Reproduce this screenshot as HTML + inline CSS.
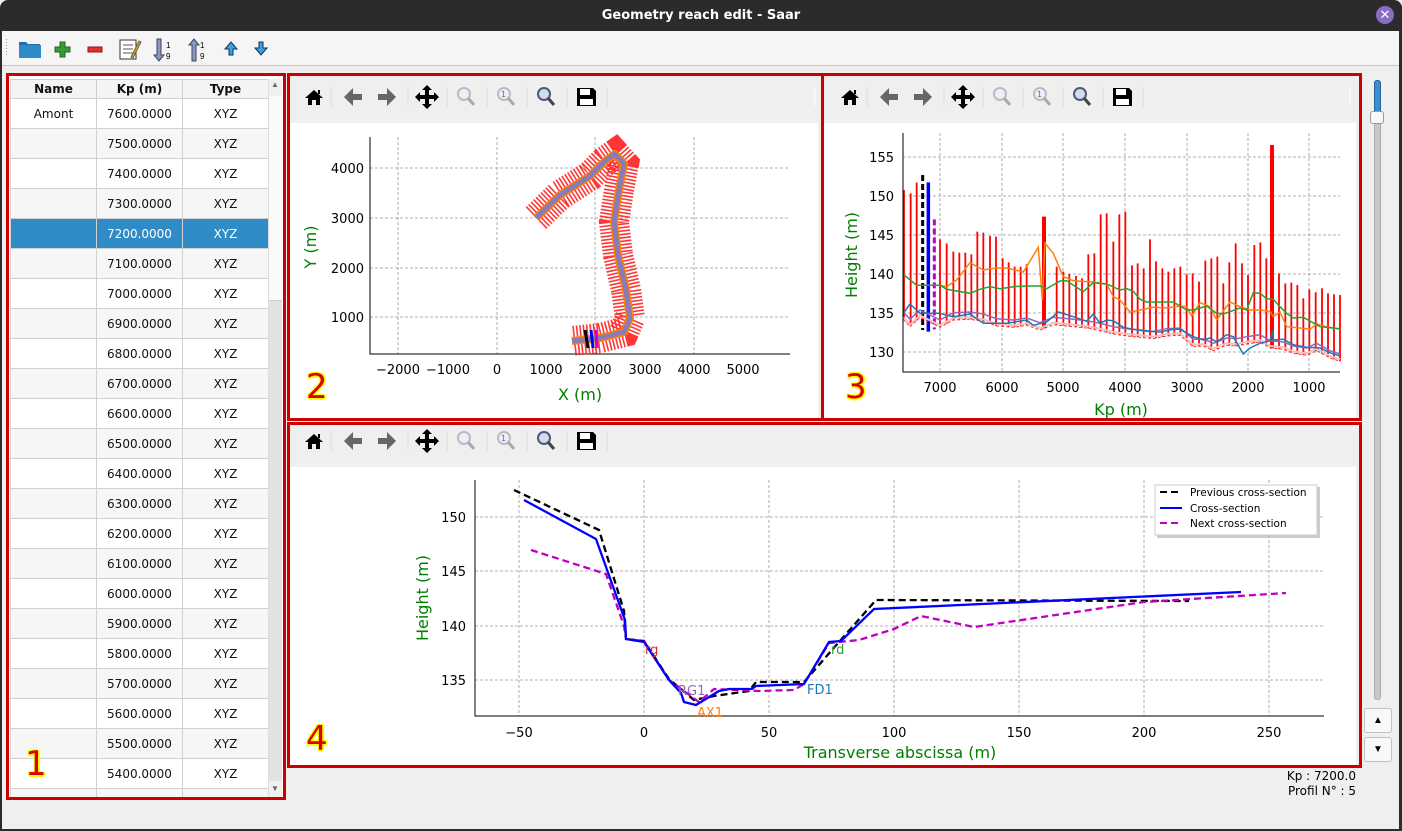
<!DOCTYPE html>
<html><head><meta charset="utf-8"><style>
*{margin:0;padding:0;box-sizing:border-box}
body{width:1402px;height:831px;background:#efefef;font-family:"Liberation Sans","DejaVu Sans",sans-serif;position:relative;overflow:hidden}
.abs{position:absolute}
#title{left:0;top:0;width:1402px;height:31px;background:#2b2b2b;color:#fff;font:bold 13px "DejaVu Sans",sans-serif;text-align:center;line-height:31px;border-radius:8px 8px 0 0}
#close{right:8px;top:6px;width:18px;height:18px;border-radius:50%;background:#8a6cc1;color:#fff;font-size:13px;line-height:18px;text-align:center}
.red{border:3px solid #cc0000}
table{border-collapse:collapse;font:12px "DejaVu Sans",sans-serif;table-layout:fixed}
td,th{border:1px solid #d0d0d0;text-align:center;height:30px;color:#111}
th{height:19px;font-weight:bold;background:#f4f4f4}
tr.g td{background:#f6f6f6}
tr.s td{background:#308cc6;color:#fff}
.num{font:34px "DejaVu Sans",sans-serif;color:#dd0000;text-shadow:-1px -1px 0 #ff0,1px -1px 0 #ff0,-1px 1px 0 #ff0,1px 1px 0 #ff0,0 2px 0 #ff0,2px 0 0 #ff0}
</style></head><body>
<div id="title" class="abs">Geometry reach edit - Saar</div>
<div id="close" class="abs">✕</div>
<div class="abs" style="left:0;top:31px;width:2px;height:800px;background:#2b2b2b"></div>
<div class="abs" style="left:1399px;top:31px;width:3px;height:800px;background:#2b2b2b"></div>
<div class="abs" style="left:0;top:829px;width:1402px;height:2px;background:#2b2b2b"></div>
<div class="abs" style="left:2px;top:31px;width:1397px;height:35px;background:#f5f5f5;border-bottom:1px solid #c8c8c8"></div>

<svg class="abs" style="left:0;top:31px" width="300" height="36">
<g fill="#999"><rect x="6" y="8" width="1" height="1"/><rect x="6" y="11" width="1" height="1"/><rect x="6" y="14" width="1" height="1"/><rect x="6" y="17" width="1" height="1"/><rect x="6" y="20" width="1" height="1"/><rect x="6" y="23" width="1" height="1"/></g>
<path d="M19 11h7l2 2h12v14H19z" fill="#1d6fa5"/><rect x="19" y="14" width="22" height="13" fill="#2d8bc9"/>
<path d="M60 11h5v5h5v5h-5v5h-5v-5h-5v-5h5z" fill="#3a9a3a" stroke="#226622"/>
<rect x="88" y="16" width="14" height="5" fill="#e03030" stroke="#a01010"/>
<rect x="120" y="9" width="16" height="19" fill="#fff" stroke="#333"/><g stroke="#555"><line x1="123" y1="14" x2="133" y2="14"/><line x1="123" y1="18" x2="133" y2="18"/><line x1="123" y1="22" x2="133" y2="22"/></g><path d="M131 26l8-16 2 1-8 16z" fill="#d9a020" stroke="#664"/>
<path d="M157 8v16h-3l5 6 5-6h-3V8z" fill="#8898c8" stroke="#445"/><text x="166" y="17" font-size="8">1</text><text x="166" y="28" font-size="8">9</text>
<path d="M192 30V14h-3l5-6 5 6h-3v16z" fill="#8898c8" stroke="#445"/><text x="200" y="17" font-size="8">1</text><text x="200" y="28" font-size="8">9</text>
<path d="M229 24v-6h-4l6-7 6 7h-4v6z" fill="#3aa0e0" stroke="#135"/>
<path d="M259 11v6h-4l6 7 6-7h-4v-6z" fill="#3aa0e0" stroke="#135"/>
</svg>

<div class="abs red" style="left:6px;top:73px;width:280px;height:727px"></div>
<div class="abs" style="left:9px;top:76px;width:274px;height:721px;background:#fff;overflow:hidden">
<table style="position:absolute;left:1px;top:3px;width:259px">
<colgroup><col style="width:86px"><col style="width:86px"><col style="width:86px"></colgroup>
<tr><th>Name</th><th>Kp (m)</th><th>Type</th></tr>
<tr><td>Amont</td><td>7600.0000</td><td>XYZ</td></tr>
<tr class="g"><td></td><td>7500.0000</td><td>XYZ</td></tr>
<tr><td></td><td>7400.0000</td><td>XYZ</td></tr>
<tr class="g"><td></td><td>7300.0000</td><td>XYZ</td></tr>
<tr class="s"><td></td><td>7200.0000</td><td>XYZ</td></tr>
<tr class="g"><td></td><td>7100.0000</td><td>XYZ</td></tr>
<tr><td></td><td>7000.0000</td><td>XYZ</td></tr>
<tr class="g"><td></td><td>6900.0000</td><td>XYZ</td></tr>
<tr><td></td><td>6800.0000</td><td>XYZ</td></tr>
<tr class="g"><td></td><td>6700.0000</td><td>XYZ</td></tr>
<tr><td></td><td>6600.0000</td><td>XYZ</td></tr>
<tr class="g"><td></td><td>6500.0000</td><td>XYZ</td></tr>
<tr><td></td><td>6400.0000</td><td>XYZ</td></tr>
<tr class="g"><td></td><td>6300.0000</td><td>XYZ</td></tr>
<tr><td></td><td>6200.0000</td><td>XYZ</td></tr>
<tr class="g"><td></td><td>6100.0000</td><td>XYZ</td></tr>
<tr><td></td><td>6000.0000</td><td>XYZ</td></tr>
<tr class="g"><td></td><td>5900.0000</td><td>XYZ</td></tr>
<tr><td></td><td>5800.0000</td><td>XYZ</td></tr>
<tr class="g"><td></td><td>5700.0000</td><td>XYZ</td></tr>
<tr><td></td><td>5600.0000</td><td>XYZ</td></tr>
<tr class="g"><td></td><td>5500.0000</td><td>XYZ</td></tr>
<tr><td></td><td>5400.0000</td><td>XYZ</td></tr>
<tr class="g"><td></td><td>5300.0000</td><td>XYZ</td></tr>
</table>
<div class="abs" style="left:259px;top:3px;width:14px;height:718px;background:#f0f0f0;border-left:1px solid #ddd"></div>
<div class="abs" style="left:260px;top:20px;width:13px;height:205px;background:#fafafa;border-bottom:1px solid #ccc"></div>
<div class="abs" style="left:260px;top:225px;width:13px;height:480px;background:#e2e2e2"></div>
<div class="abs" style="left:262px;top:4px;font-size:8px;color:#666">▲</div>
<div class="abs" style="left:262px;top:708px;font-size:8px;color:#666">▼</div>
</div>
<div class="abs num" style="left:25px;top:744px">1</div>

<div class="abs red" style="left:287px;top:73px;width:537px;height:348px"></div>
<div class="abs red" style="left:821px;top:73px;width:541px;height:348px"></div>
<div class="abs red" style="left:287px;top:422px;width:1075px;height:346px"></div>
<div class="abs" style="left:290px;top:123px;width:528px;height:295px;background:#fff"></div>
<div class="abs" style="left:824px;top:123px;width:532px;height:295px;background:#fff"></div>
<div class="abs" style="left:290px;top:467px;width:1066px;height:298px;background:#fff"></div>

<div class="abs" style="left:1374px;top:80px;width:7px;height:620px;background:#c8c8c8;border:1px solid #aaa;border-radius:3px"></div>
<div class="abs" style="left:1374px;top:80px;width:7px;height:36px;background:#3a8fd0;border:1px solid #27649a;border-radius:3px"></div>
<div class="abs" style="left:1370px;top:111px;width:14px;height:13px;background:#f8f8f8;border:1px solid #999;border-radius:3px"></div>
<div class="abs" style="left:1364px;top:708px;width:28px;height:25px;background:#f8f8f8;border:1px solid #c0c0c0;border-radius:3px;font-size:10px;text-align:center;line-height:23px">▲</div>
<div class="abs" style="left:1364px;top:737px;width:28px;height:25px;background:#f8f8f8;border:1px solid #c0c0c0;border-radius:3px;font-size:10px;text-align:center;line-height:23px">▼</div>
<div class="abs" style="left:1270px;top:769px;width:86px;font-size:12px;text-align:right;line-height:15px;font-family:'DejaVu Sans',sans-serif">Kp : 7200.0<br>Profil N° : 5</div>

<svg class="abs" style="left:0;top:0" width="1402" height="831" font-family="DejaVu Sans, sans-serif">
<defs>
<g id="tb">
<path d="M-9 1l9-8 9 8h-3v7h-4v-5h-4v5h-4v-7z" fill="#000"/><rect x="4" y="-7" width="2" height="4"/>
<line x1="17" y1="-10" x2="17" y2="10" stroke="#ddd"/>
<path d="M30 0l9-9v6h9v6h-9v6z" fill="#666"/>
<path d="M82 0l-9-9v6h-9v6h9v6z" fill="#666"/>
<line x1="94" y1="-10" x2="94" y2="10" stroke="#ddd"/>
<path d="M113 -12l5 5h-3v5h5v-3l5 5-5 5v-3h-5v5h3l-5 5-5-5h3v-5h-5v3l-5-5 5-5v3h5v-5h-3z" fill="#000"/>
<line x1="133" y1="-10" x2="133" y2="10" stroke="#ddd"/>
<circle cx="150" cy="-3" r="6" fill="#eef" stroke="#bbb" stroke-width="2"/><line x1="154" y1="1" x2="160" y2="8" stroke="#aaa" stroke-width="3"/>
<line x1="173" y1="-10" x2="173" y2="10" stroke="#ddd"/>
<circle cx="190" cy="-3" r="6" fill="#eef" stroke="#bbb" stroke-width="2"/><line x1="194" y1="1" x2="200" y2="8" stroke="#aaa" stroke-width="3"/><text x="187" y="0" font-size="8" fill="#667">1</text>
<line x1="213" y1="-10" x2="213" y2="10" stroke="#ddd"/>
<circle cx="230" cy="-3" r="6" fill="#cde" stroke="#557" stroke-width="2"/><line x1="234" y1="1" x2="240" y2="8" stroke="#444" stroke-width="3"/>
<line x1="253" y1="-10" x2="253" y2="10" stroke="#ddd"/>
<path d="M263 -9h16l3 3v15h-19z" fill="#000"/><rect x="266" y="-8" width="10" height="6" fill="#fff"/><rect x="266" y="2" width="13" height="6" fill="#fff"/>
<line x1="293" y1="-10" x2="293" y2="10" stroke="#ddd"/>
</g>
</defs>
<use href="#tb" x="314" y="97"/>
<use href="#tb" x="850" y="97"/>
<use href="#tb" x="314" y="441"/>
<line x1="815" y1="88" x2="815" y2="106" stroke="#fff"/>
<line x1="1350" y1="88" x2="1350" y2="106" stroke="#fff"/>

<g stroke="#999" stroke-dasharray="3 2" stroke-width="0.8">
<line x1="398" y1="137" x2="398" y2="354"/><line x1="497" y1="137" x2="497" y2="354"/><line x1="595" y1="137" x2="595" y2="354"/><line x1="694" y1="137" x2="694" y2="354"/>
<line x1="370" y1="168" x2="790" y2="168"/><line x1="370" y1="218" x2="790" y2="218"/><line x1="370" y1="268" x2="790" y2="268"/><line x1="370" y1="317" x2="790" y2="317"/>
</g>
<path d="M370 137V354H790" fill="none" stroke="#000"/>
<g font-size="13" fill="#000" text-anchor="middle">
<text x="398" y="374">−2000</text><text x="448" y="374">−1000</text><text x="497" y="374">0</text><text x="546" y="374">1000</text><text x="595" y="374">2000</text><text x="645" y="374">3000</text><text x="694" y="374">4000</text><text x="743" y="374">5000</text>
</g>
<g font-size="13" text-anchor="end"><text x="364" y="173">4000</text><text x="364" y="223">3000</text><text x="364" y="273">2000</text><text x="364" y="322">1000</text></g>
<text x="580" y="400" font-size="16" fill="#008000" text-anchor="middle">X (m)</text>
<text transform="translate(316,247) rotate(-90)" font-size="16" fill="#008000" text-anchor="middle">Y (m)</text>
<path d="M536 218L560 195L590 176L605 161L615 154L624 164L619 190L614 222L618 255L626 290L630 318L624 332L600 338L572 341" fill="none" stroke="#ff2020" stroke-width="30" stroke-dasharray="1.6 1.8" stroke-linejoin="miter" opacity="0.9"/>
<path d="M536 218L560 195L590 176L605 161L615 154L624 164L619 190L614 222L618 255L626 290L630 318L624 332L600 338L572 341" fill="none" stroke="#ff8000" stroke-width="8" stroke-linejoin="round"/>
<path d="M536 218L560 195L590 176L605 161L615 154L624 164L619 190L614 222L618 255L626 290L630 318L624 332L600 338L572 341" fill="none" stroke="#8a7ab8" stroke-width="5" stroke-linejoin="round"/>
<line x1="585" y1="330" x2="588" y2="348" stroke="#000" stroke-width="3"/><line x1="591" y1="330" x2="593" y2="348" stroke="#00f" stroke-width="3"/><line x1="596" y1="330" x2="597" y2="348" stroke="#c0c" stroke-width="3"/>

<g stroke="#999" stroke-dasharray="3 2" stroke-width="0.8">
<line x1="940" y1="133" x2="940" y2="372"/><line x1="1002" y1="133" x2="1002" y2="372"/><line x1="1063" y1="133" x2="1063" y2="372"/><line x1="1125" y1="133" x2="1125" y2="372"/><line x1="1187" y1="133" x2="1187" y2="372"/><line x1="1248" y1="133" x2="1248" y2="372"/><line x1="1309" y1="133" x2="1309" y2="372"/>
<line x1="903" y1="157" x2="1340" y2="157"/><line x1="903" y1="196" x2="1340" y2="196"/><line x1="903" y1="235" x2="1340" y2="235"/><line x1="903" y1="274" x2="1340" y2="274"/><line x1="903" y1="313" x2="1340" y2="313"/><line x1="903" y1="352" x2="1340" y2="352"/>
</g>
<g id="p3"></g>
<path d="M903 133V372H1340" fill="none" stroke="#000"/>
<g font-size="13" text-anchor="middle"><text x="940" y="392">7000</text><text x="1002" y="392">6000</text><text x="1063" y="392">5000</text><text x="1125" y="392">4000</text><text x="1187" y="392">3000</text><text x="1248" y="392">2000</text><text x="1309" y="392">1000</text></g>
<g font-size="13" text-anchor="end"><text x="894" y="162">155</text><text x="894" y="201">150</text><text x="894" y="240">145</text><text x="894" y="279">140</text><text x="894" y="318">135</text><text x="894" y="357">130</text></g>
<text x="1121" y="415" font-size="16" fill="#008000" text-anchor="middle">Kp (m)</text>
<text transform="translate(857,255) rotate(-90)" font-size="16" fill="#008000" text-anchor="middle">Height (m)</text>

<g stroke="#999" stroke-dasharray="3 2" stroke-width="0.8">
<line x1="519" y1="480" x2="519" y2="716"/><line x1="644" y1="480" x2="644" y2="716"/><line x1="769" y1="480" x2="769" y2="716"/><line x1="894" y1="480" x2="894" y2="716"/><line x1="1019" y1="480" x2="1019" y2="716"/><line x1="1144" y1="480" x2="1144" y2="716"/><line x1="1269" y1="480" x2="1269" y2="716"/>
<line x1="475" y1="517" x2="1324" y2="517"/><line x1="475" y1="571" x2="1324" y2="571"/><line x1="475" y1="626" x2="1324" y2="626"/><line x1="475" y1="680" x2="1324" y2="680"/>
</g>
<path d="M475 480V716H1324" fill="none" stroke="#000"/>
<g font-size="13" text-anchor="middle"><text x="519" y="737">−50</text><text x="644" y="737">0</text><text x="769" y="737">50</text><text x="894" y="737">100</text><text x="1019" y="737">150</text><text x="1144" y="737">200</text><text x="1269" y="737">250</text></g>
<g font-size="13" text-anchor="end"><text x="466" y="522">150</text><text x="466" y="576">145</text><text x="466" y="631">140</text><text x="466" y="685">135</text></g>
<text x="900" y="758" font-size="16" fill="#008000" text-anchor="middle">Transverse abscissa (m)</text>
<text transform="translate(428,598) rotate(-90)" font-size="16" fill="#008000" text-anchor="middle">Height (m)</text>
<polyline points="514,490 599,530 624,611 626,639 644,641 669,679 694,700 714,696 749,691 756,682 804,682 839,642 876,600 1189,601" fill="none" stroke="#000" stroke-width="2.3" stroke-dasharray="7 4"/>
<polyline points="531,550 606,574 624,626 626,639 644,641 669,680 699,702 714,689 759,691 794,690 804,684 829,643 859,640 894,629 921,616 974,627 1144,602 1286,593" fill="none" stroke="#c000c0" stroke-width="2.3" stroke-dasharray="7 4"/>
<polyline points="524,500 596,539 625,620 626,639 644,642 669,680 681,693 684,702 696,705 719,691 729,689 752,689 756,686 804,684 829,642 841,641 874,609 1241,592" fill="none" stroke="#0000ff" stroke-width="2.3"/>
<g font-size="13"><text x="645" y="654" fill="#d62728">rg</text><text x="831" y="654" fill="#2ca02c">rd</text><text x="678" y="695" fill="#9467bd">RG1</text><text x="807" y="694" fill="#1f77b4">FD1</text><text x="697" y="717" fill="#ff7f0e">AX1</text></g>
<rect x="1157" y="487" width="163" height="51" fill="#aaa" opacity="0.6"/>
<rect x="1155" y="485" width="162" height="50" fill="#fff" stroke="#ccc"/>
<line x1="1160" y1="492" x2="1182" y2="492" stroke="#000" stroke-width="2" stroke-dasharray="7 4"/>
<line x1="1160" y1="508" x2="1182" y2="508" stroke="#00f" stroke-width="2"/>
<line x1="1160" y1="523" x2="1182" y2="523" stroke="#c000c0" stroke-width="2" stroke-dasharray="7 4"/>
<g font-size="10.5"><text x="1190" y="496">Previous cross-section</text><text x="1190" y="512">Cross-section</text><text x="1190" y="527">Next cross-section</text></g>
</svg>
<div class="abs num" style="left:306px;top:367px">2</div>
<div class="abs num" style="left:845px;top:367px">3</div>
<div class="abs num" style="left:306px;top:719px">4</div>

<script>
(function(){
var NS="http://www.w3.org/2000/svg",g=document.getElementById("p3");
function T(a){return a.map(function(p){return (840+p[0]/3).toFixed(1)+","+(130+p[1]/3).toFixed(1)}).join(" ")}
function pl(pts,col,w,dash){var e=document.createElementNS(NS,"polyline");e.setAttribute("points",T(pts));e.setAttribute("fill","none");e.setAttribute("stroke",col);e.setAttribute("stroke-width",w);if(dash)e.setAttribute("stroke-dasharray",dash);g.appendChild(e);}
function ln(x,y1,y2,col,w,dash){var e=document.createElementNS(NS,"line");e.setAttribute("x1",840+x/3);e.setAttribute("x2",840+x/3);e.setAttribute("y1",130+y1/3);e.setAttribute("y2",130+y2/3);e.setAttribute("stroke",col);e.setAttribute("stroke-width",w);if(dash)e.setAttribute("stroke-dasharray",dash);g.appendChild(e);}
var pur=[[190,546],[210,568],[240,540],[300,570],[340,548],[390,546],[430,552],[470,566],[520,570],[560,564],[600,578],[640,562],[700,568],[740,572],[780,580],[820,590],[860,596],[900,600],[940,604],[980,596],[1020,594],[1060,628],[1090,626],[1120,640],[1160,624],[1190,626],[1220,620],[1260,614],[1290,632],[1330,636],[1360,648],[1400,654],[1430,640],[1470,662],[1500,672]];
function bot(x){for(var i=0;i<pur.length-1;i++){if(x>=pur[i][0]&&x<=pur[i+1][0]){var t=(x-pur[i][0])/(pur[i+1][0]-pur[i][0]);return pur[i][1]+t*(pur[i+1][1]-pur[i][1])+22;}}return 690;}
var tops=[[192,180],[212,190],[230,158],[300,328],[320,340],[340,365],[358,368],[376,368],[394,373],[412,305],[430,308],[450,318],[468,320],[488,385],[506,397],[524,410],[542,410],[560,403],[650,410],[670,425],[688,432],[708,438],[726,445],[745,373],[763,370],[782,253],[800,250],[820,335],[838,253],[856,245],[876,406],[893,400],[911,415],[930,328],[948,394],[967,415],[985,425],[1003,415],[1021,410],[1040,433],[1058,430],[1077,455],[1096,392],[1114,385],[1132,380],[1150,460],[1168,397],[1187,340],[1206,400],[1224,435],[1243,345],[1261,337],[1279,385],[1317,430],[1336,460],[1354,458],[1372,465],[1390,505],[1408,478],[1427,487],[1446,475],[1464,490],[1482,493],[1500,495]];
tops.forEach(function(t){ln(t[0],t[1],bot(t[0]),"#ff0000",1.8);});
ln(612,260,bot(612),"#ff0000",4);ln(1296,45,bot(1296),"#ff0000",4);
ln(248,135,600,"#000",3,"6 3");ln(265,157,605,"#0000ff",3.5);ln(283,268,598,"#c000c0",3,"6 3");
pl(pur.map(function(p){return [p[0],p[1]+22]}),"#ff3030",1,"3 2");
pl(pur.map(function(p){return [p[0],p[1]+16]}),"#f0c0c0",2);
pl([[190,433],[230,466],[300,466],[320,470],[350,450],[390,398],[430,420],[470,414],[500,414],[550,426],[595,352],[607,510],[615,340],[640,370],[670,440],[700,452],[760,456],[800,462],[820,500],[840,510],[870,546],[900,540],[940,532],[980,534],[1020,528],[1040,530],[1055,558],[1080,518],[1110,530],[1130,570],[1170,516],[1200,530],[1230,540],[1260,540],[1290,544],[1300,560],[1320,546],[1340,590],[1380,594],[1410,598],[1430,582],[1460,590],[1500,598]],"#ff7f0e",1.5);
pl([[190,433],[230,466],[300,466],[320,478],[390,490],[420,478],[450,470],[480,476],[520,470],[560,468],[600,468],[620,476],[660,453],[680,452],[730,485],[760,458],[800,462],[840,480],[860,476],[880,484],[900,508],[920,516],[1000,516],[1040,540],[1060,540],[1080,534],[1100,528],[1130,550],[1150,552],[1200,534],[1220,540],[1240,488],[1260,490],[1280,506],[1300,508],[1320,530],[1340,550],[1360,564],[1390,562],[1440,590],[1500,596]],"#2ca02c",1.5);
pl(pur,"#9467bd",1.5);
pl([[190,550],[210,522],[240,550],[300,550],[320,556],[340,560],[390,552],[430,580],[470,580],[500,580],[560,570],[580,586],[620,576],[655,546],[700,560],[740,574],[760,552],[780,580],[800,570],[820,572],[850,592],[880,598],[920,604],[960,606],[1000,598],[1020,598],[1060,620],[1090,630],[1110,624],[1130,636],[1160,614],[1180,620],[1210,672],[1230,654],[1260,640],[1290,632],[1298,602],[1300,630],[1330,628],[1360,644],[1400,652],[1440,654],[1470,668],[1500,678]],"#1f77b4",1.5);
})();
</script>
</body></html>
